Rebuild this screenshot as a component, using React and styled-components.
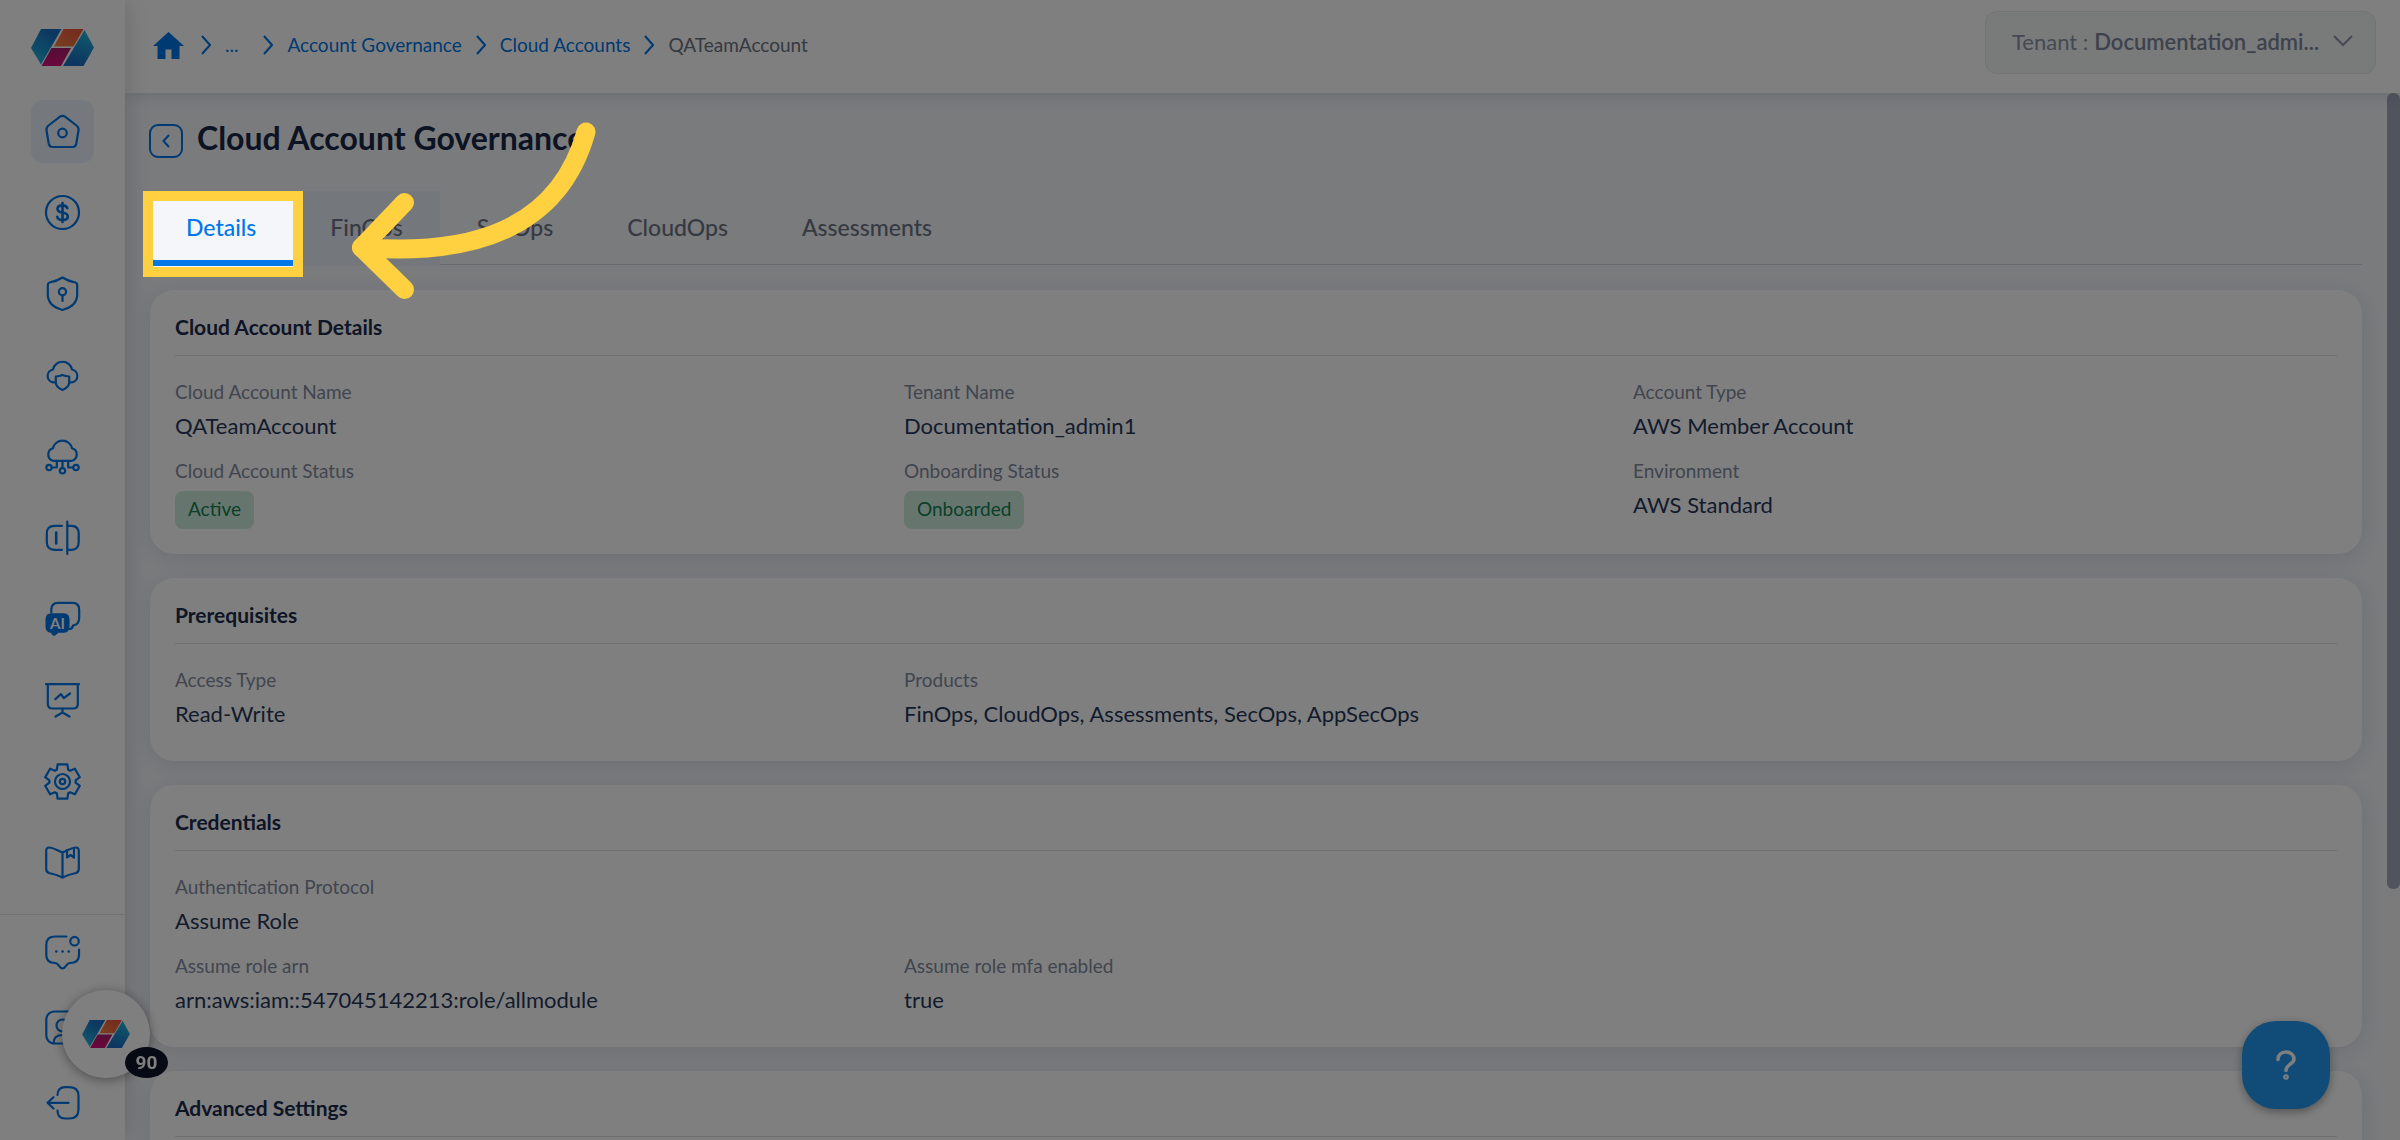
import React from "react"
import styled, { createGlobalStyle } from "styled-components"

const GlobalStyle = createGlobalStyle`
  * {
    box-sizing: border-box;
  }
  body {
    margin: 0;
    overflow: hidden;
    background: #f4f6fa;
    font-family: Lato, "Open Sans", sans-serif;
    color: #26375a;
  }
  button, select {
    font-family: inherit;
  }
`

const Shell = styled.div`
  display: flex;
  height: 100vh;
  overflow: hidden;
`

/* ---------- sidebar ---------- */

const Sidebar = styled.aside`
  display: flex;
  flex-direction: column;
  flex: 0 0 125px;
  background: #ffffff;
  box-shadow: 0 0 24px rgba(30, 40, 60, 0.2);
  z-index: 2;
`

const LogoLink = styled.a`
  display: flex;
  justify-content: center;
  align-items: flex-end;
  height: 66px;
  flex: none;
`

const NavGroup = styled.nav`
  display: flex;
  flex-direction: column;
  align-items: center;
  justify-content: space-between;
  flex: 1;
  padding: 34px 0 20px;
`

const FooterGroup = styled.nav`
  display: flex;
  flex-direction: column;
  align-items: center;
  gap: 12px;
  flex: none;
  padding: 6px 0;
  border-top: 1px solid #e2e4e8;
`

const NavButton = styled.button`
  display: flex;
  align-items: center;
  justify-content: center;
  width: 63px;
  height: 63px;
  padding: 0;
  border: 0;
  border-radius: 12px;
  background: ${(props) => (props.$active ? "#eaf3fb" : "transparent")};
  color: #0074e4;
`

/* ---------- top bar ---------- */

const Content = styled.div`
  display: flex;
  flex-direction: column;
  flex: 1;
  min-width: 0;
`

const TopBar = styled.header`
  display: flex;
  justify-content: space-between;
  align-items: flex-start;
  flex: 0 0 93px;
  padding: 11px 24px 0 28px;
  background: #ffffff;
  box-shadow: 0 2px 14px rgba(40, 80, 120, 0.18);
  z-index: 1;
`

const Breadcrumb = styled.nav`
  display: flex;
  align-items: center;
  gap: 14px;
  height: 70px;
  padding-bottom: 2px;
  font-size: 19px;
  line-height: 26px;
  color: #0074e4;

  a {
    display: flex;
    color: inherit;
    text-decoration: none;
  }
`

const HomeLink = styled.a`
  margin-right: 3px;
`

const Ellipsis = styled.a`
  margin-right: 11px;
`

const Current = styled.span`
  color: #6b7280;
`

const Tenant = styled.label`
  display: flex;
  align-items: center;
  width: 391px;
  height: 63px;
  padding: 0 22px 3px 26px;
  border: 1px solid #e4e6ea;
  border-radius: 12px;
  background: #f3f4f5;
  font-size: 22px;
  color: #8a93a6;
`

const TenantSelect = styled.select`
  flex: 1;
  min-width: 0;
  margin-left: 6px;
  padding: 0;
  border: 0;
  appearance: none;
  background: transparent;
  font-size: 22px;
  font-weight: 600;
  color: #7b859a;
`

/* ---------- page ---------- */

const Scroller = styled.div`
  display: flex;
  flex: 1;
  min-height: 0;
`

const Main = styled.main`
  flex: 1;
  min-width: 0;
  overflow: hidden;
  padding: 31px 25px 0 24px;
`

const Rail = styled.div`
  flex: 0 0 13px;
  background: #f7f7f8;
`

const Thumb = styled.div`
  height: 76%;
  border-radius: 6px;
  background: #a0a8b8;
`

const Heading = styled.div`
  display: flex;
  align-items: flex-start;
  gap: 14px;
  height: 67px;
`

const BackButton = styled.button`
  display: flex;
  align-items: center;
  justify-content: center;
  width: 34px;
  height: 34px;
  padding: 0;
  border: 2px solid #0074e4;
  border-radius: 9px;
  background: transparent;
  color: #0074e4;
`

const Title = styled.h1`
  margin: 0;
  font-size: 32px;
  line-height: 28px;
  font-weight: 700;
  color: #182847;
`

const Tabs = styled.div`
  display: flex;
  height: 74px;
  margin-bottom: 25px;
  border-bottom: 1px solid #cdd2da;
`

const Tab = styled.button`
  height: 75px;
  padding: 3px 37px 0;
  border: 0;
  border-bottom: 6px solid ${(props) => (props.$active ? "#0078e8" : "transparent")};
  background: ${(props) => (props.$hover ? "#e9eff8" : "transparent")};
  font-size: 23px;
  line-height: 28px;
  font-weight: 500;
  color: ${(props) => (props.$active ? "#0078e8" : "#6b7385")};
`

const Cards = styled.div`
  display: flex;
  flex-direction: column;
  gap: 24px;
  padding-left: 1px;
`

const Card = styled.section`
  padding: 25px;
  border-radius: 24px;
  background: #ffffff;
  box-shadow: 0 4px 20px rgba(40, 45, 70, 0.12);
`

const CardTitle = styled.h2`
  margin: 0 0 24px;
  padding-bottom: 17px;
  border-bottom: 1px solid #d9dce1;
  font-size: 21px;
  line-height: 23px;
  font-weight: 700;
  color: #1a2b4c;
`

const Fields = styled.dl`
  display: grid;
  grid-template-columns: repeat(3, 1fr);
  gap: 11px 25px;
  margin: 0;
`

const Field = styled.div`
  grid-column-start: ${(props) => (props.$first ? 1 : "auto")};
`

const Label = styled.dt`
  font-size: 19px;
  line-height: 24px;
  color: #828a9e;
`

const Value = styled.dd`
  margin: 4px 0;
  font-size: 22px;
  line-height: 36px;
  color: #26375a;
`

const Status = styled.dd`
  width: fit-content;
  height: 38px;
  margin: 8px 0 0;
  padding: 0 13px;
  border-radius: 8px;
  background: #ccecdf;
  font-size: 19px;
  line-height: 36px;
  color: #14804f;
`

/* ---------- floating things ---------- */

const HelpButton = styled.button`
  position: fixed;
  right: 70px;
  bottom: 31px;
  display: flex;
  align-items: center;
  justify-content: center;
  width: 88px;
  height: 88px;
  padding: 0;
  border: 0;
  border-radius: 34px;
  background: #2298f2;
  box-shadow: 0 3px 10px rgba(0, 0, 0, 0.35);
  color: #ffffff;
  z-index: 3;
`

const Launcher = styled.button`
  position: fixed;
  left: 62px;
  bottom: 62px;
  display: flex;
  align-items: center;
  justify-content: center;
  width: 88px;
  height: 88px;
  padding: 0;
  border: 0;
  border-radius: 50%;
  background: #ffffff;
  box-shadow: 0 2px 12px rgba(0, 0, 0, 0.4);
  z-index: 3;
`

const Count = styled.span`
  position: absolute;
  left: 63px;
  top: 57px;
  width: 43px;
  border-radius: 50%;
  background: #0c1428;
  font-family: Roboto, sans-serif;
  font-size: 19px;
  line-height: 31px;
  font-weight: 700;
  color: #ffffff;
`

const Tour = styled.div`
  position: fixed;
  inset: 0;
  overflow: hidden;
  pointer-events: none;
  z-index: 10;
`

const Spotlight = styled.div`
  position: absolute;
  left: 143px;
  top: 191px;
  width: 160px;
  height: 86px;
  border: 10px solid #ffd140;
  box-shadow: 0 0 0 4000px rgba(0, 0, 0, 0.5);
`

const Arrow = styled.svg`
  position: absolute;
  left: 340px;
  top: 110px;
`

/* ---------- drawings ---------- */

function Icon({ children }) {
  return (
    <svg width="37" height="37" viewBox="-0.5 -0.5 37 37" fill="none" stroke="currentColor" strokeWidth="2.200" strokeLinecap="round" strokeLinejoin="round" aria-hidden="true">
      {children}
    </svg>
  )
}

function Logo({ id, width, height }) {
  return (
    <svg width={width} height={height} viewBox="0 0 63 37" aria-hidden="true">
      <defs>
        <linearGradient id={id + "l"} x1="0.7" y1="0" x2="0.2" y2="1">
          <stop offset="0.1" stopColor="#1a6fc0" />
          <stop offset="1" stopColor="#20b4dc" />
        </linearGradient>
        <linearGradient id={id + "r"} x1="0.7" y1="0" x2="0.4" y2="1">
          <stop offset="0" stopColor="#20b4dc" />
          <stop offset="0.9" stopColor="#1a6fc0" />
        </linearGradient>
        <linearGradient id={id + "o"} x1="0" y1="1" x2="1" y2="0">
          <stop offset="0" stopColor="#f4803c" />
          <stop offset="1" stopColor="#e8503c" />
        </linearGradient>
        <linearGradient id={id + "m"} x1="0" y1="0" x2="0" y2="1">
          <stop offset="0" stopColor="#a81c68" />
          <stop offset="1" stopColor="#d4107c" />
        </linearGradient>
      </defs>
      <path d="M0 19L10 0H30.500L20.500 17.500L10 35.500Z" fill={`url(#${id}l)`} />
      <path d="M32.500 0H52.500L42.500 17.500H23Z" fill={`url(#${id}o)`} />
      <path d="M20.500 19H40L30 37H10.500Z" fill={`url(#${id}m)`} />
      <path d="M53.500 1L63 18.500L52.500 37H32Z" fill={`url(#${id}r)`} />
    </svg>
  )
}

function Chevron() {
  return (
    <svg width="10" height="20" viewBox="0 0 10 20" fill="none" stroke="currentColor" strokeWidth="2" aria-hidden="true">
      <path d="M1 1L9 10L1 19" />
    </svg>
  )
}

// cog outline with evenly spaced flat teeth
function cogPath(teeth, outer, inner) {
  const points = []
  for (let i = 0; i < teeth; i++) {
    const mid = (i / teeth) * 360 - 90
    const corners = [
      [mid - 25, inner],
      [mid - 16, outer],
      [mid + 16, outer],
      [mid + 25, inner],
    ]
    corners.forEach(([deg, r]) => {
      const a = (deg * Math.PI) / 180
      points.push(`${(18 + r * Math.cos(a)).toFixed(1)} ${(18 + r * Math.sin(a)).toFixed(1)}`)
    })
  }
  return `M${points.join("L")}Z`
}

const mainNav = [
  {
    name: "Home",
    icon: (
      <>
        <path d="M15.500 3.200L4 12Q1.500 14 2 17L4.300 30.500Q5 33.500 8 33.500H28Q31 33.500 31.700 30.500L34 17Q34.500 14 32 12L20.500 3.200Q18 1.400 15.500 3.200Z" />
        <circle cx="18" cy="19.500" r="4.300" />
      </>
    ),
  },
  {
    name: "FinOps",
    icon: (
      <>
        <circle cx="18" cy="18" r="16.500" />
        <path strokeWidth="2.600" d="M18 8.500V27.500M22.800 13.800C22.300 11.700 20.400 10.900 18 10.900C15 10.900 13 12.200 13 14.400C13 17 15.500 17.600 18 18.100C21 18.700 23.300 19.500 23.300 22C23.300 24.300 21 25.500 18 25.500C15.200 25.500 13.200 24.500 12.700 22.200" />
      </>
    ),
  },
  {
    name: "SecOps",
    icon: (
      <>
        <path d="M18 2C13.500 5 9 6.300 5 7Q3.300 7.400 3.300 9.500V19C3.300 27 9 32 18 34.500C27 32 32.700 27 32.700 19V9.500Q32.700 7.400 31 7C27 6.300 22.500 5 18 2Z" />
        <circle cx="18" cy="16.300" r="3.600" />
        <path d="M18 20V25.500" />
      </>
    ),
  },
  {
    name: "Cloud Security",
    icon: (
      <>
        <path d="M11 24.800H8.500A6.500 6.500 0 0 1 8.500 12A9.700 9.700 0 0 1 27.500 12A6.500 6.500 0 0 1 27.500 24.800H25" />
        <path d="M11.300 19C14 19 16 18.500 18 17.600C20 18.500 22 19 24.700 19V25C24.700 29 21.500 31 18 32.500C14.500 31 11.300 29 11.300 25Z" />
      </>
    ),
  },
  {
    name: "CloudOps",
    icon: (
      <>
        <path d="M8.500 22.300A6.500 6.500 0 0 1 8.500 9.800A9.700 9.700 0 0 1 27.500 9.800A6.500 6.500 0 0 1 27.500 22.300Z" />
        <path d="M12.300 22.300V29H7.300M18 22.300V29.500M23.700 22.300V29H28.700" />
        <circle cx="4.500" cy="29" r="2.700" />
        <circle cx="18" cy="32.300" r="2.700" />
        <circle cx="31.500" cy="29" r="2.700" />
      </>
    ),
  },
  {
    name: "Compare",
    icon: (
      <>
        <path d="M17.500 6.300H10Q2.300 6.300 2.300 14V22.500Q2.300 30.300 10 30.300H17.500" />
        <path d="M22.800 2V34.500M22.800 6.300H27Q34.200 6.300 34.200 14V22.500Q34.200 30.300 27 30.300H22.800" />
        <path strokeWidth="2.600" d="M11.700 13V24" />
      </>
    ),
  },
  {
    name: "AI Assistant",
    icon: (
      <>
        <path d="M6.800 12V9Q6.800 2.300 13.500 2.300H28Q34.700 2.300 34.700 9V17.500Q34.700 24 28.500 25Q28 28.500 25 28.500" />
        <path fill="currentColor" stroke="none" d="M7 12.700H19Q25 12.700 25 18.700V26.300Q25 32.300 19 32.300H14L10.500 35Q8.500 36 7.500 34L6.500 32.300Q1 32 1 26.300V18.700Q1 12.700 7 12.700Z" />
        <text x="13" y="28" textAnchor="middle" fill="#ffffff" stroke="none" fontSize="15" fontWeight="700">
          AI
        </text>
      </>
    ),
  },
  {
    name: "Reports",
    icon: (
      <>
        <path d="M1.500 1.700H34.500M3.300 1.700V21.500Q3.300 26 8 26H28.500Q33.300 26 33.300 21.500V1.700" />
        <path d="M18 26V30M11 34L18 30L25 34" />
        <path d="M10.800 16.700L16.500 11.700L19.300 15.700L25.500 11" />
      </>
    ),
  },
  {
    name: "Settings",
    icon: (
      <>
        <path d={cogPath(6, 17.8, 13.2)} />
        <circle cx="18" cy="18" r="7.500" />
        <circle cx="18" cy="18" r="2.700" />
      </>
    ),
  },
  {
    name: "Guides",
    icon: (
      <>
        <path d="M18 7.800C14 6.500 10 3.500 5 3Q1.700 2.800 1.700 6.500V24.500Q1.700 27.500 4.500 28.500Q12 30 18 33Q24 30 31.500 28.500Q34.300 27.500 34.300 24.500V6.500Q34.300 2.800 31 3C26 3.500 22 6.500 18 7.800Z" />
        <path d="M18 7.800V33M22.500 5.500V13L26 10.500L29.500 13V3.500" />
      </>
    ),
  },
]

const footerNav = [
  {
    name: "Messages",
    icon: (
      <>
        <path d="M22 2H10.500Q1.800 2 1.800 10.500V20.500Q1.800 28.500 10.500 28.500C14.500 28.500 14.500 34 18 34C21.500 34 21.500 28.500 25.500 28.500Q34.500 28.500 34.500 20.500V15" />
        <circle cx="30" cy="6.700" r="4.300" />
        <path strokeWidth="2.600" d="M11.800 17H11.900M18 17H18.100M24.200 17H24.300" />
      </>
    ),
  },
  {
    name: "Profile",
    icon: (
      <>
        <rect x="1.800" y="2" width="32" height="32" rx="8" />
        <circle cx="18" cy="16" r="6" />
        <path d="M9 34C9 28 13 25.500 18 25.500C23 25.500 27 28 27 34" />
      </>
    ),
  },
  {
    name: "Sign out",
    icon: (
      <>
        <path d="M13 10.500Q13 2.700 20.500 2.700H25Q34 2.700 34 11.700V25Q34 34 25 34H20.500Q13 34 13 26" />
        <path d="M24 18.300H3.500M9 12.700L3 18.300L9 24" />
      </>
    ),
  },
]

const tabs = ["Details", "FinOps", "SecOps", "CloudOps", "Assessments"]

const cards = [
  {
    title: "Cloud Account Details",
    fields: [
      { label: "Cloud Account Name", value: "QATeamAccount" },
      { label: "Tenant Name", value: "Documentation_admin1" },
      { label: "Account Type", value: "AWS Member Account" },
      { label: "Cloud Account Status", value: "Active", status: true },
      { label: "Onboarding Status", value: "Onboarded", status: true },
      { label: "Environment", value: "AWS Standard" },
    ],
  },
  {
    title: "Prerequisites",
    fields: [
      { label: "Access Type", value: "Read-Write" },
      { label: "Products", value: "FinOps, CloudOps, Assessments, SecOps, AppSecOps" },
    ],
  },
  {
    title: "Credentials",
    fields: [
      { label: "Authentication Protocol", value: "Assume Role" },
      { label: "Assume role arn", value: "arn:aws:iam::547045142213:role/allmodule", first: true },
      { label: "Assume role mfa enabled", value: "true" },
    ],
  },
  { title: "Advanced Settings", fields: [] },
]

export default function App() {
  return (
    <>
      <GlobalStyle />
      <Shell>
        <Sidebar>
          <LogoLink href="#" aria-label="Dashboard">
            <Logo id="side" width={63} height={37} />
          </LogoLink>
          <NavGroup>
            {mainNav.map((item, i) => (
              <NavButton key={item.name} aria-label={item.name} $active={i === 0}>
                <Icon>{item.icon}</Icon>
              </NavButton>
            ))}
          </NavGroup>
          <FooterGroup>
            {footerNav.map((item) => (
              <NavButton key={item.name} aria-label={item.name}>
                <Icon>{item.icon}</Icon>
              </NavButton>
            ))}
          </FooterGroup>
        </Sidebar>

        <Content>
          <TopBar>
            <Breadcrumb aria-label="Breadcrumb">
              <HomeLink href="#" aria-label="Home">
                <svg width="31" height="27" viewBox="0 0 31 27" fill="currentColor" aria-hidden="true">
                  <path d="M15.500 0L31 14H26.500V27H18.500V17.500H12.500V27H4.500V14H0Z" />
                </svg>
              </HomeLink>
              <Chevron />
              <Ellipsis href="#">...</Ellipsis>
              <Chevron />
              <a href="#">Account Governance</a>
              <Chevron />
              <a href="#">Cloud Accounts</a>
              <Chevron />
              <Current>QATeamAccount</Current>
            </Breadcrumb>
            <Tenant>
              Tenant :
              <TenantSelect>
                <option>Documentation_admi...</option>
              </TenantSelect>
              <svg width="20" height="12" viewBox="0 0 20 12" fill="none" stroke="currentColor" strokeWidth="2" aria-hidden="true">
                <path d="M1 1L10 10L19 1" />
              </svg>
            </Tenant>
          </TopBar>

          <Scroller>
            <Main>
              <Heading>
                <BackButton aria-label="Back">
                  <svg width="8" height="14" viewBox="0 0 8 14" fill="none" stroke="currentColor" strokeWidth="2" aria-hidden="true">
                    <path d="M7 1L1.500 7L7 13" />
                  </svg>
                </BackButton>
                <Title>Cloud Account Governance</Title>
              </Heading>
              <Tabs role="tablist">
                {tabs.map((name, i) => (
                  <Tab key={name} role="tab" aria-selected={i === 0} $active={i === 0} $hover={i === 1}>
                    {name}
                  </Tab>
                ))}
              </Tabs>
              <Cards>
                {cards.map((card) => (
                  <Card key={card.title}>
                    <CardTitle>{card.title}</CardTitle>
                    <Fields>
                      {card.fields.map((field) => (
                        <Field key={field.label} $first={field.first}>
                          <Label>{field.label}</Label>
                          {field.status ? <Status>{field.value}</Status> : <Value>{field.value}</Value>}
                        </Field>
                      ))}
                    </Fields>
                  </Card>
                ))}
              </Cards>
            </Main>
            <Rail>
              <Thumb />
            </Rail>
          </Scroller>
        </Content>
      </Shell>

      <Launcher aria-label="Open launcher">
        <Logo id="launch" width={48} height={28} />
        <Count>90</Count>
      </Launcher>
      <HelpButton aria-label="Help">
        <svg width="20" height="30" viewBox="0 0 20 30" fill="none" stroke="currentColor" strokeWidth="3.600" strokeLinecap="round" aria-hidden="true">
          <path d="M2 9.500C2 5 5.500 2 10 2C14.500 2 18 5 18 9C18 14 10 14.500 10 20.500" />
          <circle cx="10" cy="27" r="1" />
        </svg>
      </HelpButton>

      <Tour>
        <Spotlight />
        <Arrow width="270" height="200" viewBox="340 110 270 200" fill="none" stroke="#ffd140" strokeWidth="19" strokeLinecap="round" strokeLinejoin="round">
          <path d="M404.500 202.500L361.500 247.500L404.500 289.500" />
          <path d="M586 132C558 231 470 256 361.500 247.500" />
        </Arrow>
      </Tour>
    </>
  )
}
